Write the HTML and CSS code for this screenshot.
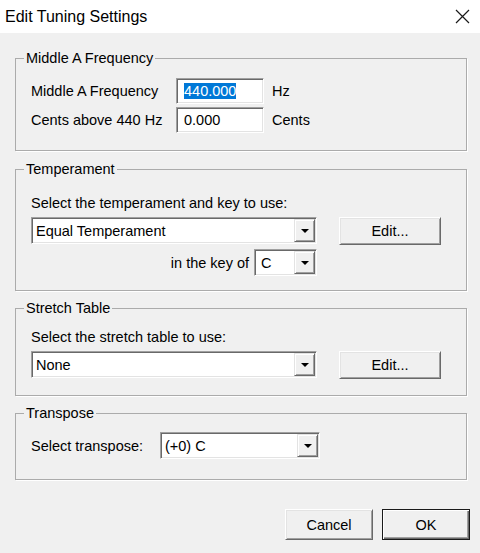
FILE: index.html
```
<!DOCTYPE html>
<html>
<head>
<meta charset="utf-8">
<title>Edit Tuning Settings</title>
<link rel="stylesheet" href="styles.css">
</head>
<body>
<div class="titlebar">
  <span class="title">Edit Tuning Settings</span>
  <svg class="close" viewBox="0 0 15 15" aria-hidden="true"><path d="M1 1 L14 14 M14 1 L1 14" stroke="#1a1a1a" stroke-width="1.2" fill="none"/></svg>
</div>
<div class="dialog">
  <fieldset class="group">
    <legend>Middle A Frequency</legend>
    <div class="group-body gb-freq">
      <div class="freq-grid">
        <span>Middle A Frequency</span>
        <div class="textbox"><span class="sel">440.000</span></div>
        <span class="unit">Hz</span>
        <span>Cents above 440 Hz</span>
        <div class="textbox">0.000</div>
        <span class="unit">Cents</span>
      </div>
    </div>
  </fieldset>

  <fieldset class="group group-temp">
    <legend>Temperament</legend>
    <div class="group-body gb-temp">
      <div class="prompt">Select the temperament and key to use:</div>
      <div class="combo-row">
        <div class="combo-col">
          <div class="combo"><span class="combo-text">Equal Temperament</span><span class="combo-btn"><span class="arrow"></span></span></div>
          <div class="key-row">
            <span>in the key of</span>
            <div class="combo combo-key"><span class="combo-text">C</span><span class="combo-btn"><span class="arrow"></span></span></div>
          </div>
        </div>
        <button class="btn btn-edit">Edit...</button>
      </div>
    </div>
  </fieldset>

  <fieldset class="group">
    <legend>Stretch Table</legend>
    <div class="group-body gb-stretch">
      <div class="prompt">Select the stretch table to use:</div>
      <div class="combo-row">
        <div class="combo-col">
          <div class="combo"><span class="combo-text">None</span><span class="combo-btn"><span class="arrow"></span></span></div>
        </div>
        <button class="btn btn-edit">Edit...</button>
      </div>
    </div>
  </fieldset>

  <fieldset class="group">
    <legend>Transpose</legend>
    <div class="group-body gb-trans">
      <div class="trans-row">
        <span class="trans-label">Select transpose:</span>
        <div class="combo combo-trans"><span class="combo-text">(+0) C</span><span class="combo-btn"><span class="arrow"></span></span></div>
      </div>
    </div>
  </fieldset>

  <div class="actions">
    <button class="btn btn-dlg">Cancel</button>
    <button class="btn btn-dlg btn-default">OK</button>
  </div>
</div>
</body>
</html>
```

FILE: styles.css
```
html, body {
  margin: 0;
  padding: 0;
}

body {
  width: 480px;
  height: 553px;
  overflow: hidden;
  background: #f0f0f0;
  font-family: "Liberation Sans", Arial, sans-serif;
  font-size: 14.5px;
  line-height: 16px;
  color: #000;
}

.titlebar {
  height: 33px;
  box-sizing: border-box;
  background: #fff;
  display: flex;
  align-items: center;
  justify-content: space-between;
  padding: 0 10px 0 5px;
}

.title {
  font-size: 16px;
}

.close {
  display: block;
  width: 15px;
  height: 15px;
}

.dialog {
  padding-top: 17px;
}

.group {
  margin: 9px 13px 0 15px;
  padding: 0;
  border: 1px solid #ababab;
  box-shadow: 1px 1px 0 #fff;
  min-width: 0;
}

.group:first-child {
  margin-top: 0;
}

.group.group-temp {
  margin-top: 10px;
}

.group legend {
  margin-left: 8px;
  padding: 0 2px;
  line-height: 16px;
}

.group-body {
  padding-left: 15px;
  padding-right: 15px;
}

.gb-freq {
  padding-top: 12px;
  padding-bottom: 17px;
}

.gb-temp {
  padding-top: 18px;
  padding-bottom: 14px;
}

.gb-stretch {
  padding-top: 13px;
  padding-bottom: 16px;
}

.gb-trans {
  padding-top: 11px;
  padding-bottom: 20px;
}

.freq-grid {
  display: grid;
  grid-template-columns: 145px 88px auto;
  row-gap: 3px;
  align-items: center;
}

.unit {
  padding-left: 8px;
}

.textbox {
  height: 26px;
  box-sizing: border-box;
  background: #fff;
  border: 1px solid;
  border-color: #a0a0a0 #fff #fff #a0a0a0;
  box-shadow: inset 1px 1px 0 #696969, inset -1px -1px 0 #e3e3e3;
  padding: 0 4px 0 7px;
  display: flex;
  align-items: center;
}

.sel {
  background: #0078d7;
  color: #fff;
}

.combo-row {
  display: flex;
  align-items: flex-start;
  gap: 22px;
  margin-top: 6px;
}

.combo-col {
  width: 286px;
  display: flex;
  flex-direction: column;
  gap: 5px;
}

.combo {
  height: 27px;
  box-sizing: border-box;
  display: flex;
  background: #fff;
  border: 1px solid;
  border-color: #a0a0a0 #fff #fff #a0a0a0;
  box-shadow: inset 1px 1px 0 #696969, inset -1px -1px 0 #e3e3e3;
  padding: 1px;
}

.combo-text {
  flex: 1;
  display: flex;
  align-items: center;
  padding-left: 3px;
  white-space: nowrap;
}

.combo-btn {
  width: 21px;
  box-sizing: border-box;
  background: #f0f0f0;
  border: 1px solid;
  border-color: #e3e3e3 #696969 #696969 #e3e3e3;
  box-shadow: inset 1px 1px 0 #fff, inset -1px -1px 0 #a0a0a0;
  display: flex;
  align-items: center;
  justify-content: center;
}

.arrow {
  width: 0;
  height: 0;
  border-left: 4px solid transparent;
  border-right: 4px solid transparent;
  border-top: 4px solid #000;
}

.key-row {
  display: flex;
  justify-content: flex-end;
  align-items: center;
  gap: 5px;
}

.combo-key {
  width: 63px;
}

.combo-key .combo-text {
  padding-left: 5px;
}

.trans-row {
  display: flex;
  align-items: center;
}

.trans-label {
  width: 129px;
}

.combo-trans {
  width: 160px;
}

.btn {
  font: inherit;
  color: #000;
  background: #f0f0f0;
  border: 1px solid;
  border-color: #fff #696969 #696969 #fff;
  box-shadow: inset 1px 1px 0 #e3e3e3, inset -1px -1px 0 #a0a0a0;
  padding: 0;
  margin: 0;
}

.btn-edit {
  width: 102px;
  height: 28px;
}

.actions {
  display: flex;
  justify-content: flex-end;
  gap: 9px;
  margin-top: 29px;
  padding-right: 10px;
}

.btn-dlg {
  width: 88px;
  height: 31px;
}

.btn-default {
  border: 1px solid #1a1a1a;
  box-shadow: inset 1px 1px 0 #fff, inset -1px -1px 0 #696969, inset -2px -2px 0 #a0a0a0;
}
```
